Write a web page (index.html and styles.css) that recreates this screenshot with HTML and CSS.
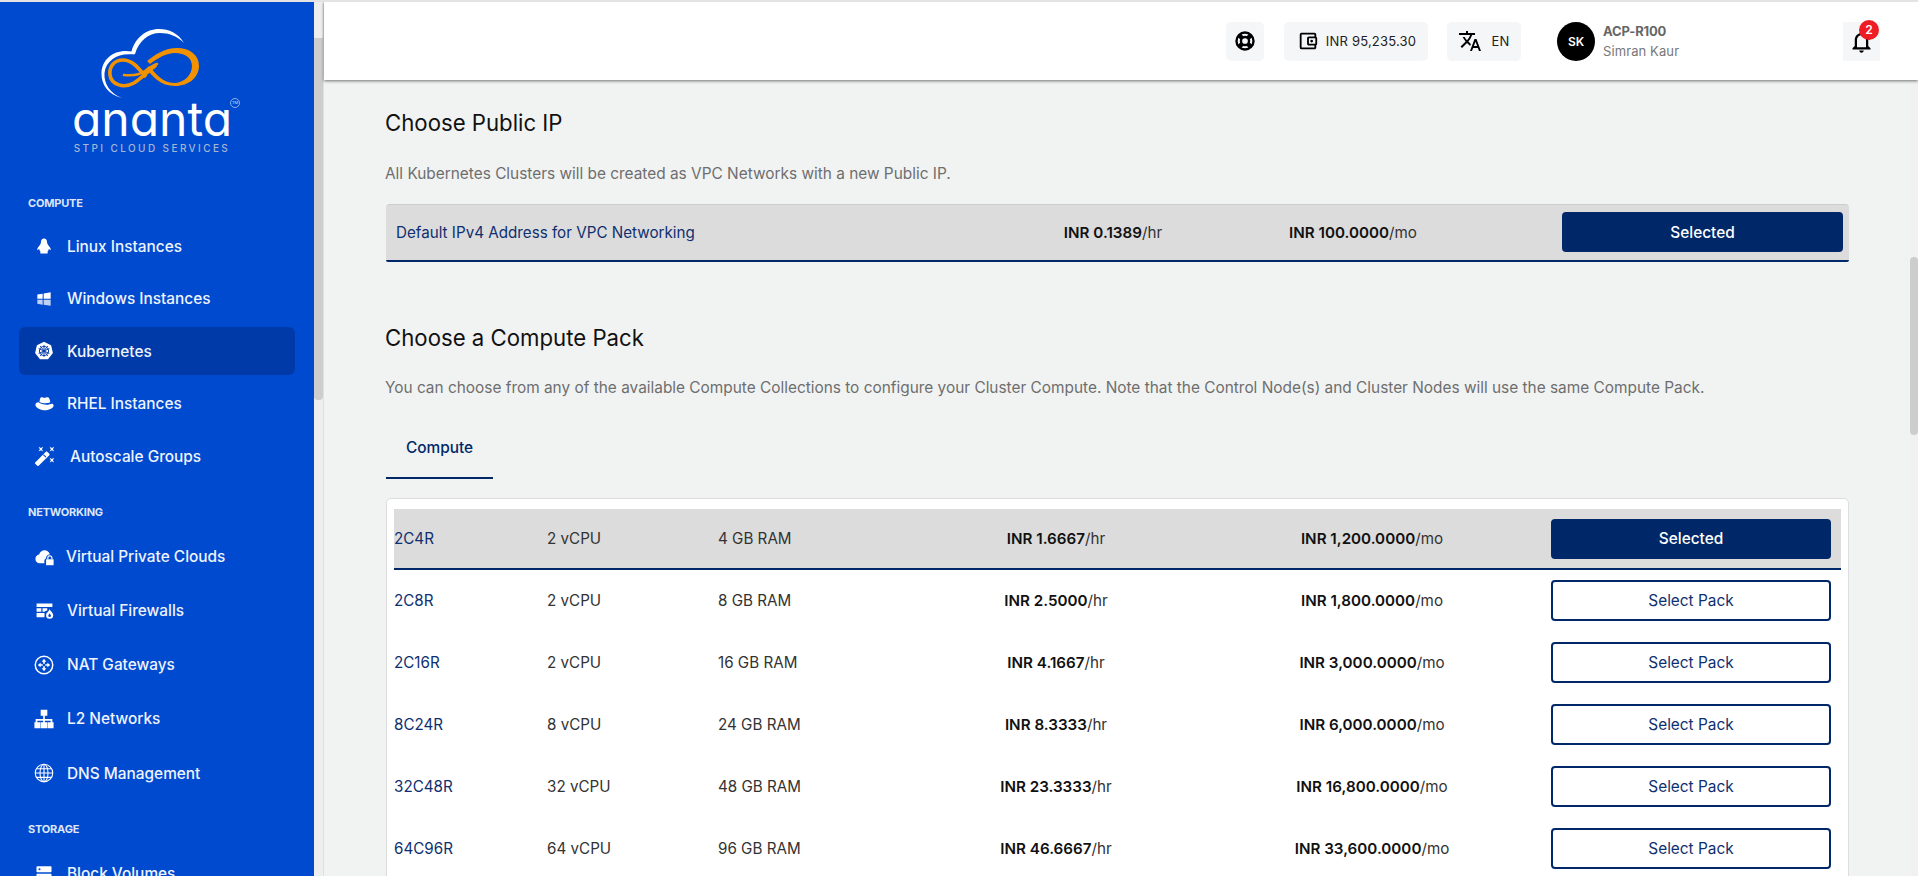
FILE: index.html
```html
<!DOCTYPE html>
<html lang="en">
<head>
<meta charset="utf-8">
<title>Ananta - Kubernetes</title>
<link rel="stylesheet" href="styles.css">
</head>
<body>
<div class="app">
  <aside class="sidebar">
    <div class="logo">
      <svg class="logo-mark" viewBox="0 0 110 72" width="110" height="72">
        <path fill="#fff" d="M22 70C9 67 1 57 1.500 45 2 32 12 23 26 23c2 0 4 .2 5.500 .6C35 10 46 1 59 1c10 0 19 4 25 14-7-7-15-10-24-10-12 0-21 8-25 21-1 .5-2 .5-3 .3C18 25 6 32 4.500 45 3.500 56 11 66 22 70z"/>
        <g transform="translate(3 5)">
          <path fill="none" stroke="#f39200" stroke-width="3.600" d="M43 44C36 36 30 27 20 27 10 27 6 35 7 42c1 9 13 14 24 8 8-5 14-12 22-18"/>
          <path fill="#f39200" d="M43 36c8 8 14 17 29 17 14 0 24-9 24-20 0-11-9-18-22-18-12 0-21 6-30 13l3 3c8-6 16-11 25-11 10 0 17 5 17 13 0 9-8 17-18 17-11 0-18-9-25-17z"/>
          <path fill="none" stroke="#f39200" stroke-width="2.600" stroke-linecap="round" d="M21 42c12 1 18-1 24-6 3-2 6-4 9-5"/>
        </g>
      </svg>
      <div class="logo-name">ananta<span class="logo-tm">TM</span></div>
      <div class="logo-sub">STPI CLOUD SERVICES</div>
    </div>

    <section class="nav-group">
      <div class="nav-label">COMPUTE</div>
      <a class="nav-item"><span class="nav-icon"><svg viewBox="0 0 24 24" width="18" height="18"><path fill="#fff" d="M12 2c-2.500 0-4 2-4 4.500 0 1.500-.5 2.500-1.500 4S3 14 3 16.500c0 .8.5 1 1.200.6.6-.4 1-1 1.300-1.500C6 18 7 19.500 8 20c-1 .3-1.500 1-1 1.500.5.6 3 .7 5 .5 2 .2 4.500.1 5-.5.5-.5 0-1.200-1-1.500 1-.5 2-2 2.500-4.400.3.5.7 1.100 1.300 1.500.7.4 1.200.2 1.200-.6 0-2.500-2.500-4.500-3.500-6S16 8 16 6.500C16 4 14.500 2 12 2z"/></svg></span>Linux Instances</a>
      <a class="nav-item"><span class="nav-icon"><svg viewBox="0 0 24 24" width="16" height="16"><path fill="#fff" d="M2 5.200 10 4v7.500H2zM11.500 3.800 22 2v9.500H11.500z"/><path fill="#fff" fill-opacity=".75" d="M2 13h8v7.500l-8-1.200zM11.500 13H22v9l-10.500-1.500z"/></svg></span>Windows Instances</a>
      <a class="nav-item is-active"><span class="nav-icon"><svg viewBox="0 0 24 24" width="20" height="20"><path fill="#fff" d="M12 1l8.500 4 2.200 9.300-5.900 7.500H7.200l-5.900-7.500L3.500 5z"/><g fill="none" stroke="#0a3fb0" stroke-width="1.200"><circle cx="12" cy="12" r="5.500"/><path d="M12 5v14M5.500 9l13 6M18.500 9l-13 6M7.500 18l9-12M16.500 18l-9-12"/></g></svg></span>Kubernetes</a>
      <a class="nav-item"><span class="nav-icon"><svg viewBox="0 0 24 24" width="19" height="19"><path fill="#fff" d="M8 4c1.500 0 2.500.8 4 .8S14.500 4 16 4c1.800 0 2.800 2.500 3.300 6.500-2 1.500-11 1.500-13.600-.5C6 7 6.500 4 8 4z"/><path fill="#fff" d="M4.500 10.500c3 3 11.500 4 15.500 2 2-.5 3.500.3 3.500 2 0 3-5 6-11 6S.500 17 .500 13.500c0-2 2-3.300 4-3z"/></svg></span>RHEL Instances</a>
      <a class="nav-item item-wand"><span class="nav-icon"><svg viewBox="0 0 24 24" width="22" height="22"><path fill="#fff" d="M7.500 5.600 10 7 8.600 4.500 10 2 7.500 3.400 5 2l1.400 2.500L5 7zm12 9.800L17 14l1.400 2.500L17 19l2.500-1.400L22 19l-1.400-2.500L22 14zM22 2l-2.500 1.400L17 2l1.400 2.500L17 7l2.500-1.400L22 7l-1.400-2.500zm-7.630 5.290a.996.996 0 0 0-1.410 0L1.290 18.960a.996.996 0 0 0 0 1.410l2.340 2.340c.39.39 1.020.39 1.410 0L16.700 11.050a.996.996 0 0 0 0-1.410l-2.330-2.350z"/><path stroke="#004ad0" stroke-width="1.200" d="M10.200 10.400l2.800 2.800"/></svg></span>Autoscale Groups</a>
    </section>

    <section class="nav-group group-wide">
      <div class="nav-label">NETWORKING</div>
      <a class="nav-item item-vpc"><span class="nav-icon"><svg viewBox="0 0 24 24" width="19" height="19"><path fill="#fff" d="M6 20.500C2.800 20.500.5 18 .5 15c0-2.800 2-5 4.700-5.400C6.200 6.200 8.800 4 12 4c3.300 0 6 2.200 6.800 5.300-2.700.3-4.800 2.400-5 5.200-1.300.6-2 1.800-2 3.200v2.800z"/><path fill="#fff" d="M14 15.500h9.500V23H14z"/><path fill="none" stroke="#fff" stroke-width="1.500" d="M16.200 15.500v-1.800a2.550 2.550 0 0 1 5.100 0v1.800"/></svg></span>Virtual Private Clouds</a>
      <a class="nav-item item-fw"><span class="nav-icon"><svg viewBox="0 0 24 24" width="19" height="19"><path fill="#fff" d="M2 3h20v4.500H2zM2 9h6v4.500H2zM9.500 9h6v3c-2 .5-3 1-3.500 1.500H9.500zM2 15h10v5.500H2z"/><path fill="#fff" d="M18.500 10c.5 2.500 4.500 4.500 4.500 8a4.500 4.500 0 0 1-9 0c0-3.500 4-5 4.500-8z"/><path fill="#0a4ad0" d="M18.500 15.500c.3 1 1.700 1.800 1.700 3a1.700 1.700 0 0 1-3.400 0c0-1.200 1.400-2 1.700-3z"/></svg></span>Virtual Firewalls</a>
      <a class="nav-item"><span class="nav-icon"><svg viewBox="0 0 24 24" width="20" height="20"><circle cx="12" cy="12" r="10.500" fill="none" stroke="#fff" stroke-width="1.800"/><path fill="#fff" d="M12 4.500 14.800 8H13v2.500h-2V8H9.200zM12 19.500 9.200 16H11v-2.500h2V16h1.800zM4.500 12 8 9.200V11h2.500v2H8v1.800zM19.500 12 16 14.800V13h-2.500v-2H16V9.200z"/></svg></span>NAT Gateways</a>
      <a class="nav-item"><span class="nav-icon"><svg viewBox="0 0 24 24" width="20" height="20"><path fill="#fff" d="M8 1h8v7h-3v4h9v4h1.500v7h-7v-7H20v-2h-7v2h3v7H8v-7h3v-2H4v2h3.500v7h-7v-7H2v-4h9V8H8z"/></svg></span>L2 Networks</a>
      <a class="nav-item"><span class="nav-icon"><svg viewBox="0 0 24 24" width="20" height="20"><g fill="none" stroke="#fff" stroke-width="1.300"><circle cx="12" cy="12" r="10.500"/><ellipse cx="12" cy="12" rx="4.800" ry="10.500"/><path d="M12 1.500v21M1.500 12h21M3 6.800h18M3 17.200h18"/></g></svg></span>DNS Management</a>
    </section>

    <section class="nav-group group-wide">
      <div class="nav-label">STORAGE</div>
      <a class="nav-item"><span class="nav-icon"><svg viewBox="0 0 24 24" width="18" height="18"><path fill="#fff" d="M3 3h18a1 1 0 0 1 1 1v6a1 1 0 0 1-1 1H3a1 1 0 0 1-1-1V4a1 1 0 0 1 1-1zm0 10h18a1 1 0 0 1 1 1v6a1 1 0 0 1-1 1H3a1 1 0 0 1-1-1v-6a1 1 0 0 1 1-1z"/><circle cx="6" cy="7" r="1.400" fill="#0a4ad0"/><circle cx="6" cy="17" r="1.400" fill="#0a4ad0"/></svg></span>Block Volumes</a>
    </section>
  </aside>

  <div class="side-scroll"><div class="side-thumb"></div></div>

  <div class="main">
    <header class="topbar">
      <div class="tool tool-help"><svg viewBox="0 0 24 24" width="22" height="22"><g fill="none" stroke="#000"><circle cx="12" cy="12" r="9.300" stroke-width="2.600"/><circle cx="12" cy="12" r="4.400" stroke-width="2.600"/><path stroke-width="5" d="M5.500 5.500l3.500 3.500M18.500 5.500L15 9M5.500 18.500L9 15M18.500 18.500L15 15"/></g></svg></div>
      <div class="tool tool-wallet"><svg viewBox="0 0 24 24" width="22" height="22"><path d="M21 7.280V5c0-1.100-.9-2-2-2H5a2 2 0 0 0-2 2v14a2 2 0 0 0 2 2h14c1.100 0 2-.9 2-2v-2.280A2 2 0 0 0 22 15V9a2 2 0 0 0-1-1.720zM20 9v6h-7V9h7zM5 19V5h14v2h-6c-1.100 0-2 .9-2 2v6c0 1.100.9 2 2 2h6v2H5z"/><circle cx="16" cy="12" r="1.500"/></svg><span>INR 95,235.30</span></div>
      <div class="tool tool-lang"><svg viewBox="0 0 24 24" width="24" height="24"><path d="M12.870 15.070l-2.540-2.510.03-.03c1.740-1.940 2.980-4.170 3.710-6.530H17V4h-7V2H8v2H1v1.990h11.170C11.500 7.920 10.440 9.750 9 11.350 8.070 10.320 7.300 9.190 6.690 8h-2c.73 1.630 1.730 3.170 2.980 4.560l-5.090 5.020L4 19l5-5 3.110 3.110.76-2.040zM18.500 10h-2L12 22h2l1.120-3h4.750L21 22h2l-4.500-12zm-2.620 7l1.620-4.330L19.120 17h-3.240z"/></svg><span>EN</span></div>
      <div class="user">
        <div class="avatar">SK</div>
        <div class="user-text">
          <div class="user-code">ACP-R100</div>
          <div class="user-name">Simran Kaur</div>
        </div>
      </div>
      <div class="tool tool-bell"><svg viewBox="0 0 24 24" width="27" height="27"><path d="M12 22c1.100 0 2-.9 2-2h-4c0 1.100.9 2 2 2zm6-6v-5c0-3.070-1.630-5.640-4.500-6.320V4c0-.83-.67-1.500-1.500-1.500s-1.500.67-1.500 1.500v.68C7.640 5.360 6 7.920 6 11v5l-2 2v1h16v-1l-2-2zm-2 1H8v-6c0-2.480 1.510-4.500 4-4.500s4 2.020 4 4.500v6z"/></svg><span class="badge">2</span></div>
    </header>

    <div class="body">
      <main class="content">
        <h2 class="title title-ip">Choose Public IP</h2>
        <p class="desc desc-ip">All Kubernetes Clusters will be created as VPC Networks with a new Public IP.</p>
        <div class="ip-row">
          <span class="name">Default IPv4 Address for VPC Networking</span>
          <span class="price"><b>INR 0.1389</b>/hr</span>
          <span class="price"><b>INR 100.0000</b>/mo</span>
          <button class="btn btn-on">Selected</button>
        </div>

        <h2 class="title title-pack">Choose a Compute Pack</h2>
        <p class="desc desc-pack">You can choose from any of the available Compute Collections to configure your Cluster Compute. Note that the Control Node(s) and Cluster Nodes will use the same Compute Pack.</p>
        <div class="tab">Compute</div>

        <div class="card">
          <div class="pack is-selected"><span class="name">2C4R</span><span>2 vCPU</span><span>4 GB RAM</span><span class="price"><b>INR 1.6667</b>/hr</span><span class="price"><b>INR 1,200.0000</b>/mo</span><button class="btn btn-on">Selected</button></div>
          <div class="pack"><span class="name">2C8R</span><span>2 vCPU</span><span>8 GB RAM</span><span class="price"><b>INR 2.5000</b>/hr</span><span class="price"><b>INR 1,800.0000</b>/mo</span><button class="btn">Select Pack</button></div>
          <div class="pack"><span class="name">2C16R</span><span>2 vCPU</span><span>16 GB RAM</span><span class="price"><b>INR 4.1667</b>/hr</span><span class="price"><b>INR 3,000.0000</b>/mo</span><button class="btn">Select Pack</button></div>
          <div class="pack"><span class="name">8C24R</span><span>8 vCPU</span><span>24 GB RAM</span><span class="price"><b>INR 8.3333</b>/hr</span><span class="price"><b>INR 6,000.0000</b>/mo</span><button class="btn">Select Pack</button></div>
          <div class="pack"><span class="name">32C48R</span><span>32 vCPU</span><span>48 GB RAM</span><span class="price"><b>INR 23.3333</b>/hr</span><span class="price"><b>INR 16,800.0000</b>/mo</span><button class="btn">Select Pack</button></div>
          <div class="pack"><span class="name">64C96R</span><span>64 vCPU</span><span>96 GB RAM</span><span class="price"><b>INR 46.6667</b>/hr</span><span class="price"><b>INR 33,600.0000</b>/mo</span><button class="btn">Select Pack</button></div>
        </div>
      </main>
      <div class="main-scroll"><div class="main-thumb"></div></div>
    </div>
  </div>
</div>
</body>
</html>
```

FILE: styles.css
```css
* { box-sizing: border-box; }
html, body { margin: 0; height: 100%; overflow: hidden; }
body {
  font-family: "Inter", "Liberation Sans", sans-serif;
  background: #f1f3f3;
  color: #333;
}
.app {
  display: flex;
  height: 876px;
  border-top: 2px solid #e3e3e3;
  overflow: hidden;
}

/* Sidebar */
.sidebar {
  flex: 0 0 314px;
  background: #004ad0;
  overflow: hidden;
  color: #eef3fc;
}
.logo {
  height: 193px;
  display: flex;
  flex-direction: column;
  align-items: center;
  padding-top: 26px;
  padding-right: 10px;
}
.logo-mark { display: block; margin-left: 5px; }
.logo-name {
  position: relative;
  font-size: 48px;
  line-height: 40px;
  margin-top: -1px;
  color: #fff;
  font-feature-settings: "cv11";
  font-weight: 400;
}
.logo-tm {
  position: absolute;
  right: -8px;
  top: -1px;
  width: 10px;
  height: 10px;
  border: 1px solid #8fb0e8;
  border-radius: 50%;
  font-size: 4px;
  line-height: 8px;
  text-align: center;
  color: #d5e2f8;
}
.logo-sub {
  margin-top: 3px;
  font-size: 10px;
  line-height: 13px;
  font-weight: 500;
  letter-spacing: 2.400px;
  color: #a6b6d2;
  white-space: nowrap;
}
.nav-group { display: flex; flex-direction: column; gap: 4.500px; }
.group-wide { gap: 6.250px; margin-top: 24px; }
.nav-label {
  font-size: 11px;
  line-height: 16px;
  font-weight: 700;
  color: #dce6f8;
  padding-left: 28px;
  margin-bottom: 6.500px;
  letter-spacing: -.2px;
}
.group-wide .nav-label { margin-bottom: 5.750px; }
.nav-item {
  display: flex;
  align-items: center;
  height: 48px;
  margin: 0 19px;
  padding-left: 15px;
  border-radius: 6px;
  font-size: 15.400px;
  font-weight: 500;
  color: #eef3fc;
  white-space: nowrap;
}
.nav-item.is-active { background: #003aa8; }
.nav-icon {
  flex: 0 0 20px;
  display: flex;
  align-items: center;
  justify-content: center;
  margin-right: 13px;
}
.item-wand .nav-icon { margin-right: 14px; }
.item-vpc .nav-icon { margin-right: 12px; }
.item-fw .nav-icon { margin-right: 13px; }

.side-scroll {
  flex: 0 0 10px;
  background: #eee;
  border-right: 1px solid #e0e0e0;
  padding-top: 36px;
}
.side-thumb {
  width: 9px;
  height: 362px;
  background: #cdcdcd;
  border-radius: 0 0 4px 4px;
}

/* Main */
.main { flex: 1; min-width: 0; display: flex; flex-direction: column; }
.topbar {
  flex: 0 0 78px;
  background: #fff;
  display: flex;
  align-items: center;
  justify-content: flex-end;
  padding-right: 38px;
  box-shadow: 0 1px 3px rgba(0,0,0,.55);
  position: relative;
  z-index: 1;
}
.tool {
  position: relative;
  height: 39px;
  background: #f5f6f8;
  border-radius: 5px;
  display: flex;
  align-items: center;
  justify-content: center;
  font-size: 13px;
  color: #222;
  letter-spacing: .2px;
}
.tool-help { width: 38px; }
.tool-wallet { width: 144px; margin-left: 20px; gap: 7px; padding-left: 1px; }
.tool-lang { width: 74px; margin-left: 19px; gap: 9px; }
.tool-bell { width: 37px; border-radius: 0; }
.badge {
  position: absolute;
  top: -2px;
  right: 1px;
  width: 20px;
  height: 20px;
  border-radius: 50%;
  background: #ee1c25;
  color: #fff;
  font-size: 12px;
  font-weight: 600;
  line-height: 20px;
  text-align: center;
  letter-spacing: 0;
}
.user {
  display: flex;
  align-items: center;
  gap: 8px;
  width: 286px;
  margin-left: 36px;
}
.avatar {
  width: 38px;
  height: 39px;
  border-radius: 50%;
  background: #000;
  color: #fff;
  font-size: 12px;
  font-weight: 600;
  line-height: 39px;
  text-align: center;
}
.user-code { font-size: 13px; font-weight: 700; line-height: 20px; color: #666; letter-spacing: -.2px; }
.user-name { font-size: 13px; line-height: 20px; color: #777; letter-spacing: .1px; }

.body { flex: 1; min-height: 0; display: flex; }
.content { flex: 1; min-width: 0; padding: 28px 61px 0 62px; overflow: hidden; }
.title {
  margin: 0 0 0 -1px;
  font-size: 22.200px;
  line-height: 30px;
  font-weight: 400;
  color: #111;
}
.title-pack { margin-top: 61px; }
.desc {
  margin: 0 0 0 -1px;
  font-size: 15.400px;
  line-height: 20px;
  color: #6e6e6e;
  white-space: nowrap;
}
.desc-ip { margin-top: 26px; }
.desc-pack { margin-top: 25px; }

.name { color: #0f2f70; }
.price { text-align: center; color: #333; white-space: nowrap; }
.price b { font-weight: 600; color: #111; }

.ip-row {
  margin-top: 20px;
  height: 58px;
  display: grid;
  grid-template-columns: 604px 226px 254px 363px;
  align-items: center;
  padding: 0 6px 1px 10px;
  background: #dcdcdc;
  border-top: 1px solid #ccc;
  border-bottom: 2px solid #002868;
  border-radius: 4px 4px 2px 2px;
  font-size: 15.200px;
}
.ip-row .btn { margin-left: 82px; width: 281px; }

.tab {
  margin-top: 20px;
  width: 107px;
  height: 61px;
  display: flex;
  align-items: center;
  justify-content: center;
  border-bottom: 2px solid #002868;
  font-size: 15.400px;
  font-weight: 500;
  color: #002868;
}
.card {
  margin-top: 19px;
  padding: 10px 7px;
  background: #fff;
  border: 1px solid #ddd;
  border-radius: 5px;
}
.pack {
  height: 62px;
  padding-bottom: 1px;
  display: grid;
  grid-template-columns: 153px 171px 171px 334px 298px 310px;
  align-items: center;
  font-size: 15.200px;
  color: #333;
}
.pack .btn { margin-left: 30px; width: 280px; }
.pack.is-selected { height: 61px; padding-bottom: 0; background: #dcdcdc; border-bottom: 2px solid #002868; }
.btn {
  height: 41px;
  border: 2px solid #002868;
  border-radius: 4px;
  background: #fff;
  color: #0f2f70;
  font: inherit;
  font-size: 15.400px;
  padding: 0;
}
.btn-on {
  height: 40px;
  background: #002868;
  color: #fff;
  font-weight: 500;
}

.main-scroll { flex: 0 0 8px; background: #f1f1f1; padding-top: 177px; }
.main-thumb { height: 178px; background: #cdcdcd; border-radius: 4px; }
```
